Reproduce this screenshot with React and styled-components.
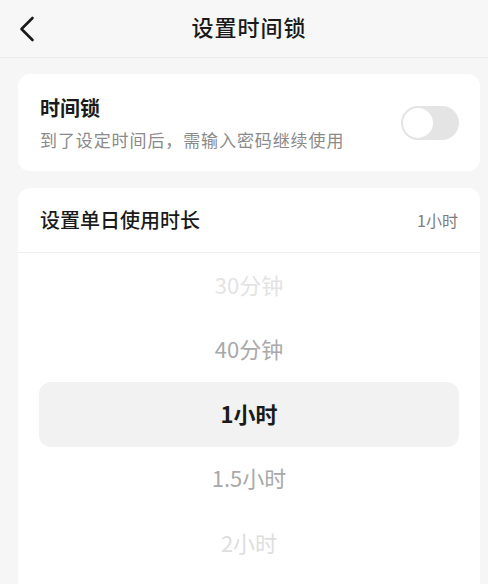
import React from "react";
import styled, { createGlobalStyle } from "styled-components";

const GlobalStyle = createGlobalStyle`
  html, body {
    margin: 0;
    padding: 0;
    background: #f6f6f6;
    overflow: hidden;
  }
  body {
    font-family: "Noto Sans CJK SC", "Noto Sans", sans-serif;
    color: #1c1c1e;
  }
`;

const Page = styled.div`
  width: 488px;
  height: 584px;
  overflow: hidden;
  background: #f6f6f6;
`;

const Header = styled.header`
  height: 57px;
  display: grid;
  grid-template-columns: 66px 1fr 56px;
  align-items: center;
  background: #f7f7f7;
  border-bottom: 1px solid #ebebeb;
`;

const BackButton = styled.button`
  border: 0;
  background: none;
  padding: 0 0 0 19px;
  height: 57px;
  display: flex;
  align-items: center;
  cursor: pointer;
`;

const Title = styled.h1`
  margin: 0 0 5px;
  text-align: center;
  font-size: 22px;
  font-weight: 500;
  letter-spacing: 1px;
  color: #1a1a1a;
`;

const Content = styled.main`
  padding: 16px 8px 0 18px;
  display: flex;
  flex-direction: column;
  gap: 17px;
`;

const Card = styled.section`
  background: #fff;
  border-radius: 12px;
  overflow: hidden;
`;

const SwitchRow = styled.div`
  height: 97px;
  padding: 0 21px 0 22px;
  display: flex;
  align-items: center;
  justify-content: space-between;
`;

const TextBlock = styled.div`
  display: flex;
  flex-direction: column;
  gap: 6px;
`;

const ItemTitle = styled.div`
  font-size: 20px;
  font-weight: ${(p) => (p.$bold ? 600 : 500)};
  line-height: 28px;
  color: #1a1a1a;
`;

const ItemDesc = styled.div`
  font-size: 17px;
  letter-spacing: 0.9px;
  line-height: 24px;
  color: #8a8a8a;
`;

const Toggle = styled.div`
  width: 58px;
  height: 34px;
  border-radius: 17px;
  background: #e4e4e4;
  padding: 2px;
  box-sizing: border-box;
  display: flex;
  justify-content: ${(p) => (p.$on ? "flex-end" : "flex-start")};
`;

const Knob = styled.span`
  width: 30px;
  height: 30px;
  border-radius: 50%;
  background: #fff;
`;

const CardHeader = styled.div`
  height: 64px;
  padding: 0 22px;
  display: flex;
  align-items: center;
  justify-content: space-between;
  border-bottom: 1px solid #eeeeee;
`;

const Value = styled.span`
  font-size: 16px;
  color: #7c7c80;
`;

const Picker = styled.div`
  padding: 0 21px 30px;
  display: flex;
  flex-direction: column;
`;

const Option = styled.div`
  height: 64.5px;
  box-sizing: border-box;
  padding-bottom: 3px;
  display: flex;
  align-items: center;
  justify-content: center;
  border-radius: 12px;
  font-size: 22px;
  font-weight: ${(p) => (p.$active ? 600 : 400)};
  color: ${(p) => p.$color};
  background: ${(p) => (p.$active ? "#f2f2f2" : "transparent")};
`;

const options = [
  { label: "30分钟", color: "#e3e3e3" },
  { label: "40分钟", color: "#a9a9a9" },
  { label: "1小时", color: "#1a1a1a", active: true },
  { label: "1.5小时", color: "#a9a9a9" },
  { label: "2小时", color: "#dedede" },
];

const BackIcon = () => (
  <svg width="16" height="26" viewBox="0 0 16 26" fill="none">
    <path
      d="M13.5 2 L2.5 13 L13.5 24"
      stroke="#1a1a1a"
      strokeWidth="2.6"
      strokeLinecap="round"
      strokeLinejoin="round"
    />
  </svg>
);

export default function App() {
  return (
    <Page>
      <GlobalStyle />
      <Header>
        <BackButton aria-label="返回">
          <BackIcon />
        </BackButton>
        <Title>设置时间锁</Title>
        <span />
      </Header>
      <Content>
        <Card>
          <SwitchRow>
            <TextBlock>
              <ItemTitle $bold>时间锁</ItemTitle>
              <ItemDesc>到了设定时间后，需输入密码继续使用</ItemDesc>
            </TextBlock>
            <Toggle>
              <Knob />
            </Toggle>
          </SwitchRow>
        </Card>
        <Card>
          <CardHeader>
            <ItemTitle>设置单日使用时长</ItemTitle>
            <Value>1小时</Value>
          </CardHeader>
          <Picker>
            {options.map((o) => (
              <Option key={o.label} $color={o.color} $active={o.active}>
                {o.label}
              </Option>
            ))}
          </Picker>
        </Card>
      </Content>
    </Page>
  );
}
